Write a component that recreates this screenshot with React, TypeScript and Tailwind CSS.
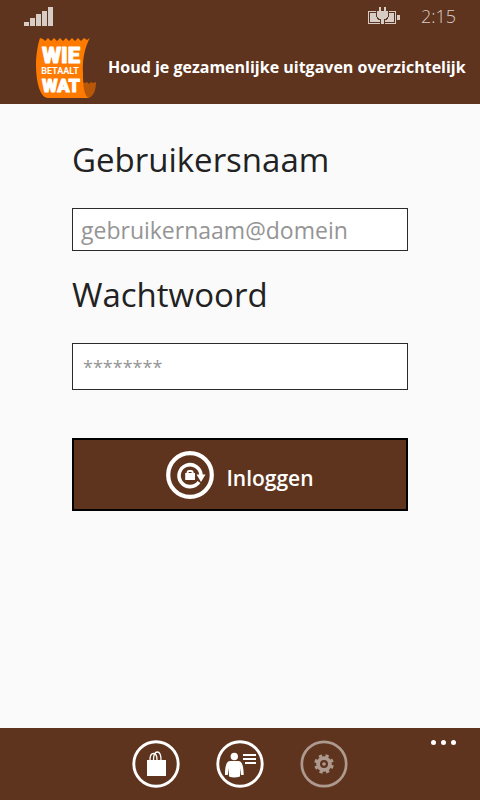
function SignalIcon() {
  return (
    <svg width="30" height="20" viewBox="0 0 30 20" fill="#d8ccc6" aria-hidden="true">
      <rect x="0" y="16" width="5" height="4" />
      <rect x="6" y="12" width="5" height="8" />
      <rect x="12" y="8" width="5" height="12" />
      <rect x="18" y="5" width="5" height="15" />
      <rect x="24" y="1" width="5" height="19" />
    </svg>
  );
}

function BatteryIcon() {
  return (
    <svg width="33" height="18" viewBox="0 0 33 18" aria-hidden="true" shapeRendering="crispEdges">
      <g fill="#d8ccc6">
        <path d="M0 4H28V17H0Z M1 5V16H27V5Z" fillRule="evenodd" />
        <rect x="2" y="6" width="24" height="9" />
        <rect x="29" y="8" width="3" height="5" />
      </g>
      <path d="M8 2H21V9L19 13H17V18H12V13H10L8 9Z" fill="#5e341e" />
      <path
        d="M11 0H13V4H16V0H18V4H20V9L18 12H16V17H13V12H11L9 9V4H11Z"
        fill="#d8ccc6"
      />
    </svg>
  );
}

function Logo() {
  return (
    <svg width="62" height="62" viewBox="0 0 62 62" role="img" aria-label="Wie Betaalt Wat">
      <path d="M46 45L49 46L51 45L53 47L55 45L57 46L60 45C60 52 58 61 51 61H44Z" fill="#b85708" />
      <path
        d="M4 1L7 2L9 4L12 1L15 4L18 1L21 4L24 1L27 4L30 1L33 4L36 1L39 4L42 1L45 4L48 1L51 3L54 1C50 8 46 20 47 36C47 48 48 61 54 61H12C4 61 0 45 0 28C0 17 2 7 4 1Z"
        fill="#ff7a00"
      />
      <g fill="#fff" textAnchor="middle" fontFamily="Roboto, sans-serif">
        <text x="25" y="26" fontSize="22" fontWeight="900" stroke="#fff" strokeWidth="1" strokeLinejoin="round">WIE</text>
        <text x="24" y="37" fontSize="9" fontWeight="700">BETAALT</text>
        <text x="25" y="55" fontSize="18" fontWeight="900" stroke="#fff" strokeWidth="1" strokeLinejoin="round">WAT</text>
      </g>
    </svg>
  );
}

function LoginIcon() {
  return (
    <svg width="48" height="48" viewBox="0 0 48 48" fill="none" stroke="#fff" aria-hidden="true">
      <circle cx="24" cy="24" r="21.8" strokeWidth="4.2" />
      <path d="M33 31A11 11 0 1 1 35 24" strokeWidth="3.6" />
      <path d="M30.5 23.5H39.5L35 31Z" fill="#fff" stroke="none" />
      <rect x="19.2" y="22" width="9.8" height="7" fill="#fff" stroke="none" />
      <path d="M21.5 22.8V21.8Q21.5 20 23.2 20H25Q26.7 20 26.7 21.8V22.8" strokeWidth="1.8" />
    </svg>
  );
}

function BagIcon() {
  return (
    <svg width="48" height="48" viewBox="0 0 48 48" fill="none" stroke="#fff" aria-hidden="true">
      <circle cx="24" cy="24" r="22.2" strokeWidth="2.9" />
      <rect x="15" y="20" width="19" height="16" fill="#fff" stroke="none" />
      <path d="M18 20C18 16 19 13.5 21.5 13.5S25 16 25 20" strokeWidth="1.3" />
      <path d="M21.5 20C21.5 15 23 12 25.3 12S29 15 29 20" strokeWidth="1.3" />
    </svg>
  );
}

function ContactIcon() {
  return (
    <svg width="48" height="48" viewBox="0 0 48 48" fill="#fff" aria-hidden="true">
      <circle cx="24" cy="24" r="22.2" strokeWidth="2.9" fill="none" stroke="#fff" />
      <ellipse cx="18.3" cy="16.5" rx="3.7" ry="3.8" />
      <path d="M14 21H22.5C26 21 27.7 26 27.7 35H25L24.3 28L24 36.5Q18 38.5 13 36.5L12.6 28L11.8 35H9C9 26 10.5 21 14 21Z" />
      <path d="M27 14H40V16H27ZM27 18H40V20H27ZM29 22H40V24H29Z" />
    </svg>
  );
}

function GearIcon() {
  return (
    <svg width="48" height="48" viewBox="0 0 48 48" fill="none" stroke="#ae998e" aria-hidden="true">
      <circle cx="24" cy="24" r="22.2" strokeWidth="2.7" />
      <circle cx="24" cy="24" r="5.9" strokeWidth="3.8" />
      <circle cx="24" cy="24" r="1.8" fill="#ae998e" stroke="none" />
      <circle cx="24" cy="24" r="8.4" strokeWidth="2.8" strokeDasharray="3.3 3.3" transform="rotate(8 24 24)" />
    </svg>
  );
}

const label = "block pb-6 text-[33px] leading-12";
const field =
  "block w-full border border-[#2b2b2b] bg-white text-gray-800 outline-none placeholder:text-[#959595]";

export default function App() {
  return (
    <div className="flex min-h-screen flex-col bg-[#fafafa] font-['Open_Sans',sans-serif] text-[#222]">
      <header className="bg-[#5e341e] text-white">
        <div className="flex h-8 items-center justify-between px-6">
          <SignalIcon />
          <div className="flex items-center gap-5 text-lg font-light text-[#d8ccc6]">
            <BatteryIcon />
            <span>2:15</span>
          </div>
        </div>
        <div className="flex h-18 items-start gap-2.5 pt-[5px] pl-9">
          <Logo />
          <p className="pt-3.5 text-base leading-8 font-bold whitespace-nowrap">
            Houd je gezamenlijke uitgaven overzichtelijk
          </p>
        </div>
      </header>

      <main className="flex-1 px-18 pt-8">
        <form onSubmit={(e) => e.preventDefault()}>
          <label htmlFor="user" className={label}>
            Gebruikersnaam
          </label>
          <input id="user" type="text" placeholder="gebruikernaam@domein" className={`${field} h-[43px] px-2 text-[23px]`} />
          <label htmlFor="password" className={`${label} pt-5`}>
            Wachtwoord
          </label>
          <input id="password" type="password" placeholder="********" className={`${field} h-[47px] px-2.5 text-lg`} />
          <button
            type="submit"
            className="mt-12 flex h-[73px] w-full items-center justify-center gap-3 border-2 border-black bg-[#5e341e] text-[21px] font-semibold text-white"
          >
            <LoginIcon />
            <span className="pt-2">Inloggen</span>
          </button>
        </form>
      </main>

      <footer className="grid h-18 grid-cols-[1fr_auto_1fr] bg-[#5e341e]">
        <nav className="col-start-2 flex items-center gap-9">
          <button type="button" aria-label="Winkel"><BagIcon /></button>
          <button type="button" aria-label="Account"><ContactIcon /></button>
          <button type="button" aria-label="Instellingen" disabled><GearIcon /></button>
        </nav>
        <button type="button" aria-label="Meer" className="mt-3 mr-6 flex gap-[5px] self-start justify-self-end">
          <span className="size-[5px] rounded-full bg-white" />
          <span className="size-[5px] rounded-full bg-white" />
          <span className="size-[5px] rounded-full bg-white" />
        </button>
      </footer>
    </div>
  );
}
